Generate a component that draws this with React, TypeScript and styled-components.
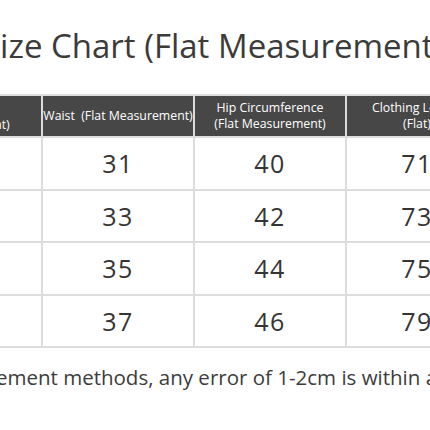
import styled, { createGlobalStyle } from "styled-components";

const GlobalStyle = createGlobalStyle`
    html, body {
        margin: 0;
        padding: 0;
        background: #ffffff;
        overflow: hidden;
    }
    body {
        font-family: "Open Sans", "Noto Sans", sans-serif;
        width: 430px;
        height: 430px;
    }
`;

const Page = styled.div`
    width: 430px;
    height: 430px;
    overflow: hidden;
    display: flex;
    flex-direction: column;
`;

const Title = styled.h1`
    margin: 23px 0 0 -18px;
    font-size: 33px;
    font-weight: 400;
    line-height: 45px;
    color: #3b3b3b;
    white-space: nowrap;
`;

const Table = styled.div`
    margin: 26px 0 0 -133px;
    display: grid;
    grid-template-columns: 174px 150px 150px 140px 150px;
    grid-template-rows: 40px repeat(4, 50.5px);
    gap: 2px;
    padding: 2px 0;
    background: #dcdcdc;
    width: max-content;
`;

const HeadCell = styled.div<{ $drop?: boolean }>`
    background: #474747;
    color: #ffffff;
    font-size: 12.3px;
    line-height: 16px;
    display: flex;
    align-items: center;
    justify-content: center;
    text-align: center;
    white-space: pre;
    padding-top: ${(p) => (p.$drop ? "2px" : "0")};
`;

const Cell = styled.div`
    background: #ffffff;
    color: #343434;
    font-size: 25px;
    letter-spacing: 1.5px;
    display: flex;
    align-items: center;
    justify-content: center;
`;

const Note = styled.p`
    margin: 15px 0 0 -234px;
    font-size: 20.5px;
    line-height: 28px;
    color: #3c3c3c;
    white-space: nowrap;
`;

const headers = [
    "Length\n(Flat Measurement)",
    "Waist  (Flat Measurement)",
    "Hip Circumference\n(Flat Measurement)",
    "Clothing Length\n(Flat)",
    "Sleeve\n(Flat)",
];

const rows = [
    ["S", "31", "40", "71", "58"],
    ["M", "33", "42", "73", "59"],
    ["L", "35", "44", "75", "60"],
    ["XL", "37", "46", "79", "61"],
];

export default function App() {
    return (
        <Page>
            <GlobalStyle />
            <Title>Size Chart (Flat Measurement)</Title>
            <Table>
                {headers.map((h, i) => (
                    <HeadCell key={h} $drop={i === 0}>{h}</HeadCell>
                ))}
                {rows.map((r) =>
                    r.map((v, i) => <Cell key={r[0] + i}>{i === 0 ? "" : v}</Cell>)
                )}
            </Table>
            <Note>Due to different measurement methods, any error of 1-2cm is within a reasonable range.</Note>
        </Page>
    );
}
